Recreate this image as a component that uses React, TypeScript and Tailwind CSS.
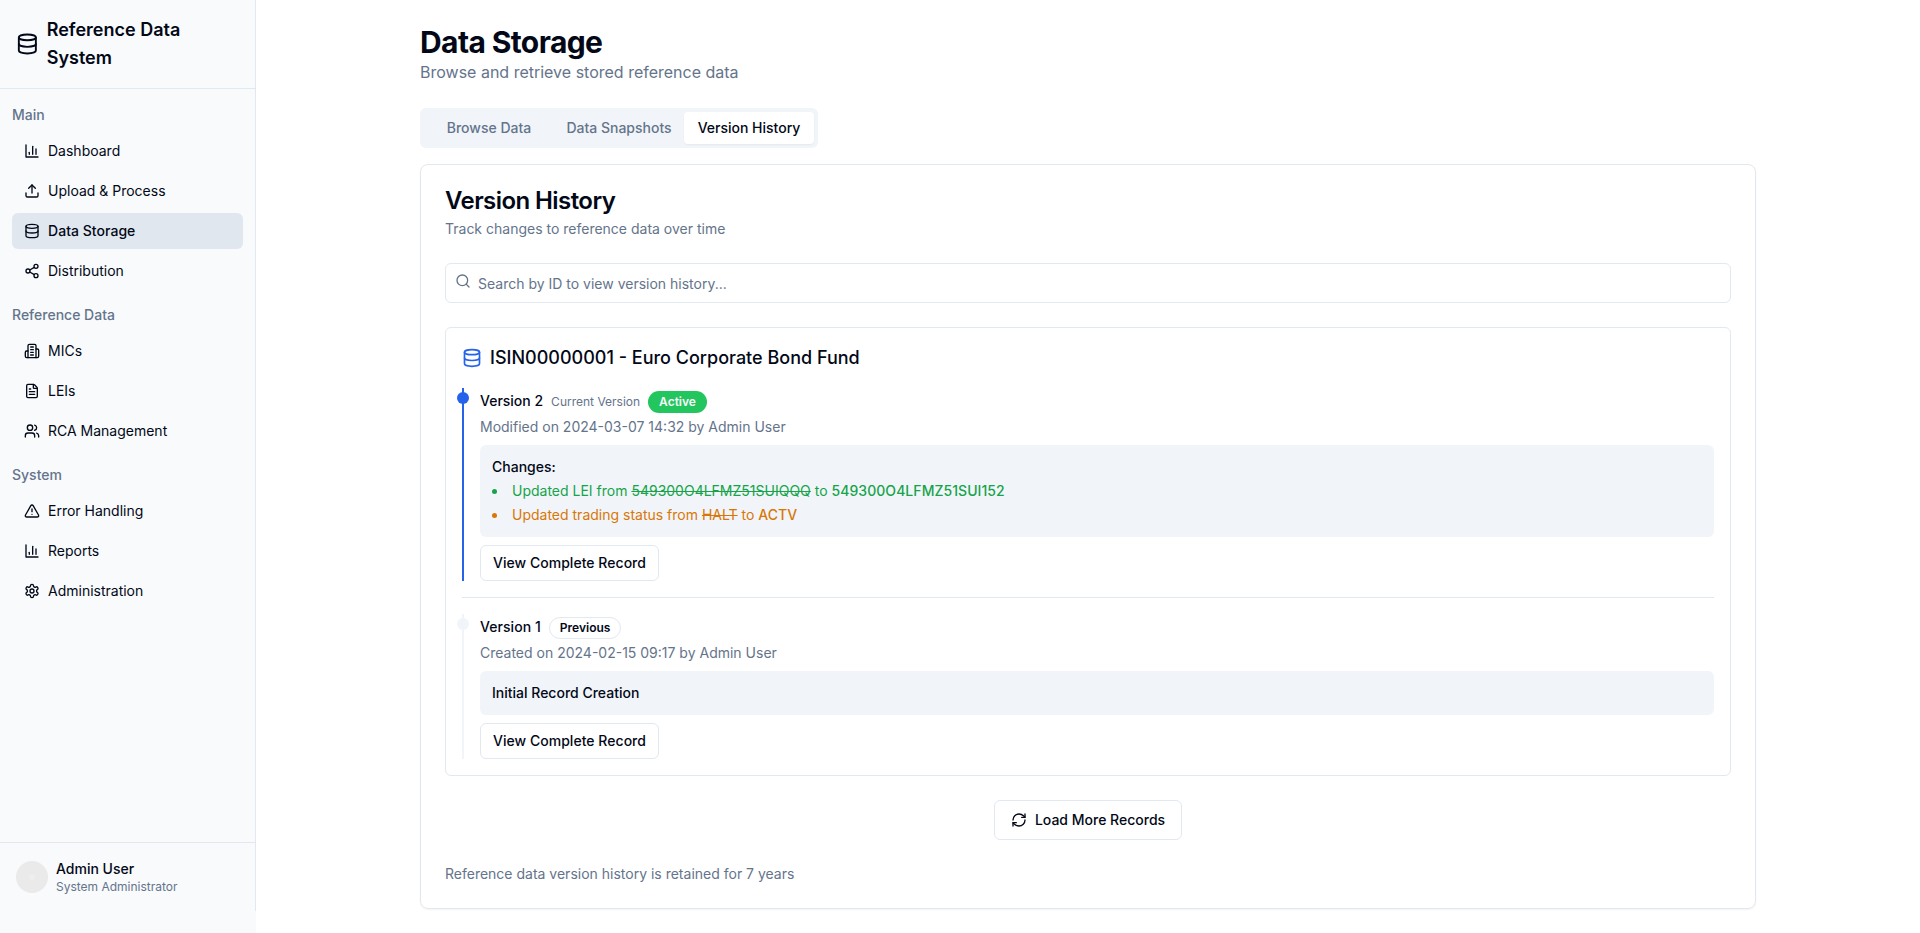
import React from "react";
import { Database, FileText, RefreshCw, Search, Share2, TriangleAlert, Upload, Users } from "lucide-react";

type IconType = React.ComponentType<{ className?: string }>;

function ChartIcon({ className }: { className?: string }) {
  return (
    <svg className={className} viewBox="0 0 24 24" fill="none" stroke="currentColor" strokeWidth="2" strokeLinecap="round" strokeLinejoin="round">
      <path d="M3 3v18h18" />
      <path d="M18 17V9" />
      <path d="M13 17V5" />
      <path d="M8 17v-3" />
    </svg>
  );
}

function BuildingIcon({ className }: { className?: string }) {
  return (
    <svg className={className} viewBox="0 0 24 24" fill="none" stroke="currentColor" strokeWidth="2" strokeLinecap="round" strokeLinejoin="round">
      <path d="M6 22V4a2 2 0 0 1 2-2h8a2 2 0 0 1 2 2v18Z" />
      <path d="M6 12H4a2 2 0 0 0-2 2v6a2 2 0 0 0 2 2h2" />
      <path d="M18 9h2a2 2 0 0 1 2 2v9a2 2 0 0 1-2 2h-2" />
      <path d="M10 6h4" />
      <path d="M10 10h4" />
      <path d="M10 14h4" />
      <path d="M10 18h4" />
    </svg>
  );
}

function GearIcon({ className }: { className?: string }) {
  return (
    <svg className={className} viewBox="0 0 24 24" fill="none" stroke="currentColor" strokeWidth="2" strokeLinecap="round" strokeLinejoin="round">
      <path d="M12.22 2h-.44a2 2 0 0 0-2 2v.18a2 2 0 0 1-1 1.73l-.43.25a2 2 0 0 1-2 0l-.15-.08a2 2 0 0 0-2.73.73l-.22.38a2 2 0 0 0 .73 2.73l.15.1a2 2 0 0 1 1 1.72v.51a2 2 0 0 1-1 1.74l-.15.09a2 2 0 0 0-.73 2.73l.22.38a2 2 0 0 0 2.73.73l.15-.08a2 2 0 0 1 2 0l.43.25a2 2 0 0 1 1 1.73V20a2 2 0 0 0 2 2h.44a2 2 0 0 0 2-2v-.18a2 2 0 0 1 1-1.73l.43-.25a2 2 0 0 1 2 0l.15.08a2 2 0 0 0 2.73-.73l.22-.39a2 2 0 0 0-.73-2.73l-.15-.08a2 2 0 0 1-1-1.74v-.5a2 2 0 0 1 1-1.74l.15-.09a2 2 0 0 0 .73-2.73l-.22-.38a2 2 0 0 0-2.73-.73l-.15.08a2 2 0 0 1-2 0l-.43-.25a2 2 0 0 1-1-1.73V4a2 2 0 0 0-2-2z" />
      <circle cx="12" cy="12" r="3" />
    </svg>
  );
}

const groups: { title: string; items: { label: string; icon: IconType; active?: boolean }[] }[] = [
  {
    title: "Main",
    items: [
      { label: "Dashboard", icon: ChartIcon },
      { label: "Upload & Process", icon: Upload },
      { label: "Data Storage", icon: Database, active: true },
      { label: "Distribution", icon: Share2 },
    ],
  },
  {
    title: "Reference Data",
    items: [
      { label: "MICs", icon: BuildingIcon },
      { label: "LEIs", icon: FileText },
      { label: "RCA Management", icon: Users },
    ],
  },
  {
    title: "System",
    items: [
      { label: "Error Handling", icon: TriangleAlert },
      { label: "Reports", icon: ChartIcon },
      { label: "Administration", icon: GearIcon },
    ],
  },
];

function Sidebar() {
  return (
    <aside className="w-64 shrink-0 bg-[#f8fafc]">
      <div className="flex h-[911px] flex-col border-r border-[#e2e8f0]">
        <div className="flex items-center gap-2 border-b border-[#e2e8f0] p-4">
          <Database className="h-6 w-6" />
          <h1 className="text-lg/7 font-semibold">Reference Data System</h1>
        </div>
        <nav className="flex-1 px-3">
          {groups.map((g) => (
            <div key={g.title} className="pt-4">
              <h2 className="mb-2 text-sm/5 font-medium text-[#64748b]">{g.title}</h2>
              <div className="flex flex-col gap-1">
                {g.items.map(({ label, icon: Icon, active }) => (
                  <button
                    key={label}
                    className={`flex h-9 items-center gap-2 rounded-md px-3 text-sm/5 ${active ? "bg-[#e1e7ef] font-medium tracking-[0.04px]" : "font-normal"}`}
                  >
                    <Icon className="h-4 w-4" />
                    {label}
                  </button>
                ))}
              </div>
            </div>
          ))}
        </nav>
        <div className="flex items-center gap-2 border-t border-[#e2e8f0] p-4">
          <div className="flex h-8 w-8 items-center justify-center rounded-full bg-[#eaeaea]">
            <div className="h-1.5 w-1.5 rounded-full bg-[#eeeeee]" />
          </div>
          <div>
            <p className="text-sm/5 font-medium">Admin User</p>
            <p className="text-xs/4 text-[#64748b]">System Administrator</p>
          </div>
        </div>
      </div>
    </aside>
  );
}

function RecordButton() {
  return (
    <button className="mt-2 block h-9 w-[179px] rounded-md border border-[#e2e8f0] bg-white text-sm/5 font-medium tracking-[0.03px]">
      View Complete Record
    </button>
  );
}

function Change({ className, children }: { className: string; children: React.ReactNode }) {
  return (
    <li className={`flex items-center ${className}`}>
      <span className="mr-[15px] h-[5px] w-[5px] rounded-full bg-current" />
      <span>{children}</span>
    </li>
  );
}

export default function App() {
  return (
    <div className="flex h-[933px] overflow-hidden bg-white font-['Inter',sans-serif] text-[#020817]">
      <Sidebar />
      <main className="flex-1">
        <div className="mx-auto max-w-[1400px] px-8 pt-6">
          <h1 className="text-3xl/9 font-bold tracking-[-0.6px]">Data Storage</h1>
          <p className="text-base/6 text-[#64748b]">Browse and retrieve stored reference data</p>

          <div className="mt-6 grid h-10 w-[398px] grid-cols-3 rounded-md bg-[#f1f5f9] p-1 text-sm/5 font-medium text-[#64748b]">
            <button className="rounded-sm px-3">Browse Data</button>
            <button className="rounded-sm px-3">Data Snapshots</button>
            <button className="rounded-sm bg-white px-3 text-[#020817] shadow-xs">Version History</button>
          </div>

          <section className="mt-4 rounded-lg border border-[#e2e8f0] p-6 shadow-xs">
            <h2 className="text-2xl/6 font-semibold tracking-[-0.57px]">Version History</h2>
            <p className="mt-1.5 text-sm/5 text-[#64748b]">Track changes to reference data over time</p>

            <div className="relative mt-6">
              <Search className="absolute top-2.5 left-2.5 h-4 w-4 text-[#64748b]" />
              <input
                className="block h-10 w-full rounded-md border border-[#e2e8f0] bg-white pr-3 pl-8 text-sm/5 placeholder:text-[#64748b]"
                placeholder="Search by ID to view version history..."
              />
            </div>

            <div className="mt-6 rounded-md border border-[#e2e8f0] p-4">
              <h3 className="flex items-center gap-2 text-lg/7 font-medium">
                <Database className="h-5 w-5 text-[#2563eb]" />
                ISIN00000001 - Euro Corporate Bond Fund
              </h3>

              <div className="relative mt-4 border-l-2 border-[#2563eb] pl-4">
                <div className="absolute top-1 left-[-7px] h-3 w-3 rounded-full bg-[#2563eb]" />
                <div className="flex h-[25px] items-baseline gap-2 pt-[3px]">
                  <span className="text-sm/5 font-medium">Version 2</span>
                  <span className="text-xs/4 text-[#64748b]">Current Version</span>
                  <span className="rounded-full border border-transparent bg-[#22c55e] px-2.5 py-0.5 text-xs/4 font-semibold text-[#f8fafc]">Active</span>
                </div>
                <p className="mt-1 text-sm/5 text-[#64748b]">Modified on 2024-03-07 14:32 by Admin User</p>
                <div className="mt-2 rounded-md bg-[#f1f5f9] p-3 text-sm/5">
                  <p className="font-medium">Changes:</p>
                  <ul className="mt-1 space-y-1">
                    <Change className="text-[#16a34a]">
                      Updated LEI from <span className="line-through">549300O4LFMZ51SUIQQQ</span> to{" "}
                      <span className="font-medium tracking-[0.05px]">549300O4LFMZ51SUI152</span>
                    </Change>
                    <Change className="text-[#d97706]">
                      Updated trading status from <span className="line-through">HALT</span> to{" "}
                      <span className="font-medium">ACTV</span>
                    </Change>
                  </ul>
                </div>
                <RecordButton />
              </div>

              <hr className="my-4 border-[#e2e8f0]" />

              <div className="relative border-l-2 border-[#f1f5f9] pl-4">
                <div className="absolute top-1 left-[-7px] h-3 w-3 rounded-full bg-[#f1f5f9]" />
                <div className="flex h-[25px] items-baseline gap-2 pt-[3px]">
                  <span className="text-sm/5 font-medium tracking-[0.06px]">Version 1</span>
                  <span className="rounded-full border border-[#e2e8f0] px-2.5 py-0.5 text-xs/4 font-semibold">Previous</span>
                </div>
                <p className="mt-1 text-sm/5 text-[#64748b]">Created on 2024-02-15 09:17 by Admin User</p>
                <div className="mt-2 rounded-md bg-[#f1f5f9] p-3 text-sm/5">
                  <p className="font-medium">Initial Record Creation</p>
                </div>
                <RecordButton />
              </div>
            </div>

            <div className="mt-6 flex justify-center">
              <button className="flex h-10 items-center gap-2 rounded-md border border-[#e2e8f0] bg-white px-4 text-sm/5 font-medium">
                <RefreshCw className="h-4 w-4" />
                Load More Records
              </button>
            </div>

            <p className="mt-6 text-sm/5 text-[#64748b]">Reference data version history is retained for 7 years</p>
          </section>
        </div>
      </main>
    </div>
  );
}
